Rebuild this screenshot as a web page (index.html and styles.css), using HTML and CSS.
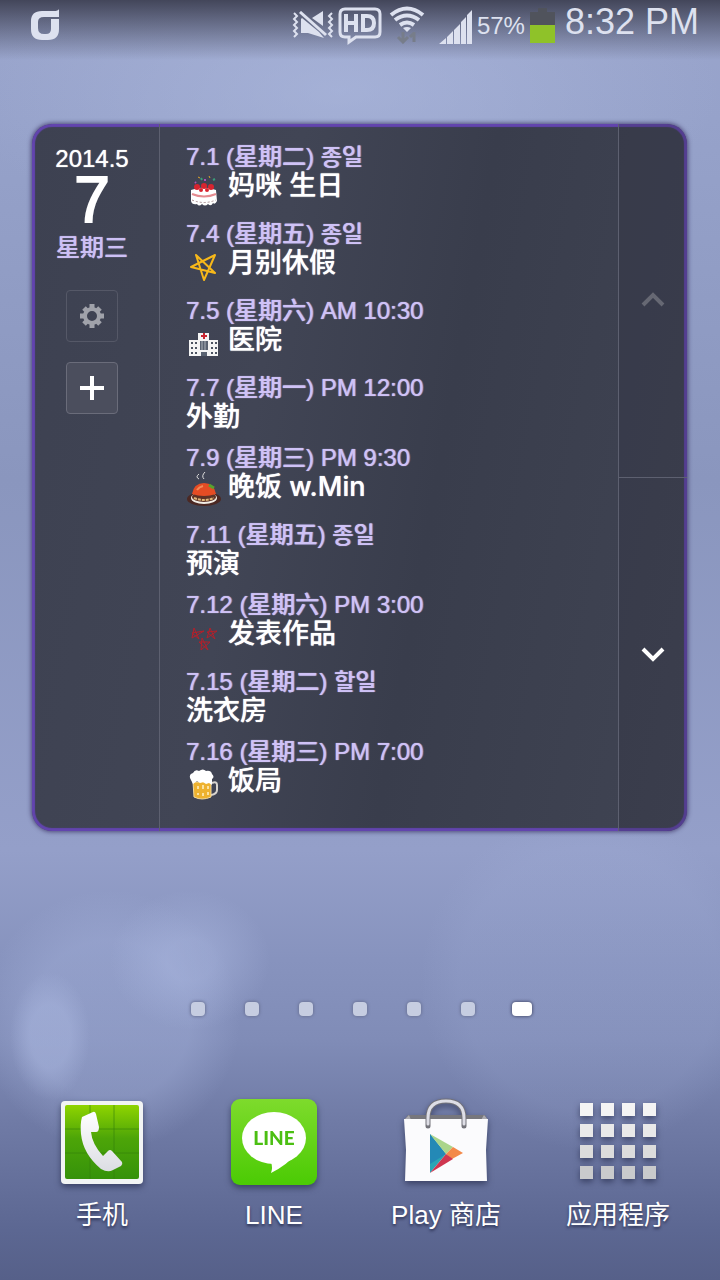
FILE: index.html
```html
<!DOCTYPE html>
<html lang="zh-CN">
<head>
<meta charset="utf-8">
<meta name="viewport" content="width=device-width, initial-scale=1">
<title>Home screen</title>
<link rel="stylesheet" href="styles.css">
</head>
<body>
<header class="status">
  <svg class="carrier" width="30" height="32" viewBox="0 0 30 32" aria-hidden="true"><path fill="currentColor" fill-rule="evenodd" d="M29 0V8H20V10H29V20Q29 31 18 31H12Q1 31 1 20V12Q1 2 12 2H24Q28 2 29 0ZM14 8Q8 8 8 13V19Q8 25 14 25H16Q21 25 21 20V10H20V8Z"/></svg>
  <div class="status-icons">
    <svg width="42" height="30" viewBox="0 0 42 30" aria-hidden="true"><g fill="none" stroke="currentColor" stroke-width="2"><path d="M2 2l3 3-3 3 3 3-3 3 3 3-3 3 3 3-3 3M40 2l-3 3 3 3-3 3 3 3-3 3 3 3-3 3 3 3"/><path stroke-width="3" d="M8 1l26 23"/></g><path fill="currentColor" d="M9 8v14h7l16 5-5-6L10 7zM20 7L31 0v15z"/></svg>
    <svg class="hd" width="44" height="38" viewBox="0 0 44 38" aria-hidden="true"><path fill="none" stroke="currentColor" stroke-width="3" d="M7 2h30q5 0 5 5v18q0 5-5 5H18l-7 5v-5H7q-5 0-5-5V7q0-5 5-5z"/><path fill="none" stroke="currentColor" stroke-width="4" d="M8 7v18M18 7v18M8 16h10M25 9v14h4q7 0 7-7t-7-7z"/></svg>
    <svg class="wifi" width="36" height="38" viewBox="0 0 36 38" aria-hidden="true"><g fill="none" stroke="currentColor" stroke-width="4"><path d="M2 9q16-13 32 0M6 14q12-9 24 0M11 19q7-5 14 0"/></g><path fill="currentColor" d="M14 22q4-2 8 0l-4 4z"/><path fill="none" stroke="#777d8a" stroke-width="3" d="M14 26v10M9 31l5 5 5-5M25 36V26M21 31l4-4"/></svg>
    <svg class="signal" width="34" height="34" viewBox="0 0 34 34" aria-hidden="true"><path fill="currentColor" d="M0 34l7-6v6zM8 27l6-6v13H8zM15 20l6-6v20h-6zM22 12l5-5v27h-5zM28 5l5-5v34h-5z"/></svg>
    <span class="percent">57%</span>
    <svg class="battery" width="26" height="36" viewBox="0 0 26 36" aria-hidden="true"><path fill="#50535c" d="M0 4h8V0h9v4h8v14H0z"/><path fill="#8fc229" d="M0 17h25v18H0z"/></svg>
    <span class="clock">8:32 PM</span>
  </div>
</header>

<main class="home">
  <section class="widget">
    <div class="today">
      <span class="month">2014.5</span>
      <span class="day">7</span>
      <span class="weekday">星期三</span>
      <button class="tool tool-settings" aria-label="设置"><svg width="26" height="26" viewBox="0 0 26 26"><circle cx="13" cy="13" r="7" fill="none" stroke="#a0a2aa" stroke-width="4"/><path stroke="#a0a2aa" stroke-width="5" d="M13 1v4M13 21v4M1 13h4M21 13h4M5 5l3 3M18 18l3 3M21 5l-3 3M8 18l-3 3"/></svg></button>
      <button class="tool tool-add" aria-label="添加"><svg width="24" height="24" viewBox="0 0 24 24"><path stroke="#fff" stroke-width="4" d="M12 0v24M0 12h24"/></svg></button>
    </div>

    <ul class="events">
      <li class="event">
        <p class="when">7.1 (星期二) <span lang="ko">종일</span></p>
        <div class="what"><svg class="mark" viewBox="0 0 34 34" aria-hidden="true"><path fill="#fff" d="M4 17q13-5 25 0l1 11q-2 4-4 2-2 4-5 1-3 3-6 0-3 3-5 0-5 1-6-3z"/><path fill="none" stroke="#e58b90" stroke-width="2" d="M5 21q12 5 24 0"/><path fill="none" stroke="#a88f92" stroke-dasharray="2 2" d="M5 27q12 5 24 0"/><g fill="#d8242f"><circle cx="10" cy="14" r="3"/><circle cx="17" cy="13" r="3"/><circle cx="24" cy="14" r="3"/><circle cx="14" cy="17" r="2"/><circle cx="20" cy="17" r="2"/></g><path stroke="#e0a52a" stroke-width="1" d="M11 4l2 1M22 3l1 2"/><path stroke="#3a9c7a" stroke-width="2" d="M14 5l1 2M26 7l2-1"/><path stroke="#b050b8" stroke-width="2" d="M18 6v2M8 9l1 1"/></svg><h3 class="title">妈咪 生日</h3></div>
      </li>
      <li class="event">
        <p class="when">7.4 (星期五) <span lang="ko">종일</span></p>
        <div class="what"><svg class="mark" viewBox="0 0 34 34" aria-hidden="true"><path fill="none" stroke="#f7b81a" stroke-width="2" stroke-linejoin="round" d="M9 5L28 23 4 17 28 5 17 30z"/></svg><h3 class="title">月别休假</h3></div>
      </li>
      <li class="event">
        <p class="when">7.5 (星期六) AM 10:30</p>
        <div class="what"><svg class="mark" viewBox="0 0 34 34" aria-hidden="true"><path fill="#f4f4f4" d="M2 13h9V6h11v7h9v16H2z"/><path stroke="#c92531" stroke-width="2" d="M17 6v6M14 9h6"/><path fill="#596271" d="M13 14h8v9h-8zM14 25h6v4h-6z"/><path stroke="#aeb4bd" d="M15 14v9M18 14v9"/><path stroke="#4c5361" stroke-width="2" stroke-dasharray="2 2" d="M4 16h6M4 21h6M4 26h6M24 16h6M24 21h6M24 26h6"/></svg><h3 class="title">医院</h3></div>
      </li>
      <li class="event">
        <p class="when">7.7 (星期一) PM 12:00</p>
        <div class="what what-plain"><h3 class="title">外勤</h3></div>
      </li>
      <li class="event">
        <p class="when">7.9 (星期三) PM 9:30</p>
        <div class="what"><svg class="mark" viewBox="0 0 34 34" aria-hidden="true"><ellipse cx="17" cy="25" rx="17" ry="7" fill="#4b2823"/><ellipse cx="17" cy="24" rx="13" ry="6" fill="#f1ede6"/><ellipse cx="17" cy="23" rx="12" ry="5" fill="#5e3226"/><path stroke="#dfb578" stroke-width="2" stroke-dasharray="3 1" d="M7 24q10 4 20 0" fill="none"/><path fill="#e54c24" d="M5 20Q7 9 17 9q10 0 12 11-12 4-24 0z"/><path stroke="#f38b58" fill="none" stroke-width="2" d="M10 16q2-3 6-4"/><path stroke="#59a12e" stroke-width="3" d="M22 11l5 3"/><path fill="none" stroke="#ddd" d="M12 0q-4 3 0 5M18-2q-4 4-1 7"/></svg><h3 class="title">晚饭 w.Min</h3></div>
      </li>
      <li class="event">
        <p class="when">7.11 (星期五) <span lang="ko">종일</span></p>
        <div class="what what-plain"><h3 class="title">预演</h3></div>
      </li>
      <li class="event">
        <p class="when">7.12 (星期六) PM 3:00</p>
        <div class="what"><svg class="mark" viewBox="0 0 34 34" aria-hidden="true"><g fill="none" stroke="#b51f2a" stroke-width="1"><path d="M7 7l5 11-7-6 12-2L5 17zM23 7l5 11-8-7 10-1-10 7zM15 17l6 12-9-8h11l-9 8z"/></g></svg><h3 class="title">发表作品</h3></div>
      </li>
      <li class="event">
        <p class="when">7.15 (星期二) <span lang="ko">할일</span></p>
        <div class="what what-plain"><h3 class="title">洗衣房</h3></div>
      </li>
      <li class="event">
        <p class="when">7.16 (星期三) PM 7:00</p>
        <div class="what"><svg class="mark" viewBox="0 0 34 34" aria-hidden="true"><path fill="none" stroke="#d8d4cf" stroke-width="2" d="M25 15q5-2 5 2v5q0 4-6 5"/><path fill="#eeb22f" stroke="#f3d99c" d="M6 14h18v15q-9 4-17 0z"/><path fill="none" stroke="#fbe2a2" stroke-width="2" d="M11 18v3M16 17v4M21 18v3M11 25v2M16 25v3M21 24v3"/><path fill="#fff" d="M6 16l-3-6q-1-4 3-5 2-4 6-2 4-3 7 0 5-1 6 3 3 3 0 5v6l-3-2-3 1-3-2-3 1-3-2z"/></svg><h3 class="title">饭局</h3></div>
      </li>
    </ul>

    <div class="scroller">
      <button class="scroll scroll-up" aria-label="上一页"><svg width="24" height="18" viewBox="0 0 24 18"><path fill="none" stroke="#666873" stroke-width="4" d="M2 14l10-10 10 10"/></svg></button>
      <button class="scroll" aria-label="下一页"><svg width="24" height="18" viewBox="0 0 24 18"><path fill="none" stroke="#fff" stroke-width="4" d="M2 4l10 10 10-10"/></svg></button>
    </div>
  </section>

  <nav class="pager" aria-label="页面">
    <button class="page" aria-label="1"></button>
    <button class="page" aria-label="2"></button>
    <button class="page" aria-label="3"></button>
    <button class="page" aria-label="4"></button>
    <button class="page" aria-label="5"></button>
    <button class="page" aria-label="6"></button>
    <button class="page page-current" aria-label="7" aria-current="page"></button>
  </nav>
</main>

<footer class="dock">
  <a class="app" href="#phone">
    <svg class="app-icon" viewBox="0 0 90 90" aria-hidden="true"><defs><linearGradient id="leaf" x2="0" y2="1"><stop offset="0" stop-color="#8fd400"/><stop offset=".45" stop-color="#4da508"/><stop offset="1" stop-color="#35920a"/></linearGradient><linearGradient id="handset" x2="0" y2="1"><stop stop-color="#fff"/><stop offset="1" stop-color="#dcdde3"/></linearGradient></defs><rect x="4" y="3" width="82" height="83" rx="4" fill="#f2f4f4"/><rect x="8" y="7" width="74" height="74" rx="2" fill="url(#leaf)"/><path stroke="#34800c" stroke-opacity=".6" d="M33 7v74M57 7v74M8 31h74M8 55h74"/><path fill="url(#handset)" d="M25 19L36 14q2-1 3 2l3 13q0 5-3 5h-5q1 12 12 24l5-5q2-2 4 0l10 11q1 2-1 4l-8 4q-5 3-12-1Q26 56 24 36q-1-10 1-17z"/></svg>
    <span class="app-name">手机</span>
  </a>
  <a class="app" href="#line">
    <svg class="app-icon" viewBox="0 0 90 90" aria-hidden="true"><defs><linearGradient id="lime" x2="0" y2="1"><stop stop-color="#7edb2c"/><stop offset="1" stop-color="#4bcb04"/></linearGradient></defs><rect x="2" y="1" width="86" height="86" rx="9" fill="url(#lime)"/><ellipse cx="45" cy="40" rx="32" ry="26" fill="#fff"/><path fill="#fff" d="M42 64q2 6 0 11 16-8 25-19l-10 3z"/><text class="bubble-text" x="45" y="47" text-anchor="middle">LINE</text></svg>
    <span class="app-name">LINE</span>
  </a>
  <a class="app" href="#store">
    <svg class="app-icon" viewBox="0 0 90 90" aria-hidden="true"><path fill="#77777d" d="M7 17h77l3 5H3z"/><path fill="#aaaab0" d="M8 17l-5 5h7zM83 17l4 5h-7z"/><path fill="#fbfbfd" d="M3 21h84l-2 31 1 31H4l1-31z"/><path fill="#2aa5b5" d="M29 36v39l16-19z"/><path fill="#2489b6" d="M29 36l16 20-16 10z"/><path fill="#abd58b" d="M29 36l23 13-7 7z"/><path fill="#f3894a" d="M52 49l10 6-11 6-6-5z"/><path fill="#cf3650" d="M29 75l16-19 7 5z"/><path fill="none" stroke="#73737a" stroke-width="5" stroke-linecap="round" d="M27 28V20q0-17 18-17t18 17v8"/><path fill="none" stroke="#dedee6" stroke-width="3" stroke-linecap="round" d="M27 26V20q0-17 18-17t18 17v6"/></svg>
    <span class="app-name">Play 商店</span>
  </a>
  <a class="app" href="#apps">
    <svg class="app-icon" viewBox="0 0 90 90" aria-hidden="true"><path fill="#f4f4f4" d="M7 5h13v13H7zM28 5h13v13H28zM49 5h13v13H49zM70 5h13v13H70z"/><path fill="#e9e9e9" d="M7 26h13v13H7zM28 26h13v13H28zM49 26h13v13H49zM70 26h13v13H70z"/><path fill="#dcdcdc" d="M7 47h13v13H7zM28 47h13v13H28zM49 47h13v13H49zM70 47h13v13H70z"/><path fill="#c9cacc" d="M7 68h13v13H7zM28 68h13v13H28zM49 68h13v13H49zM70 68h13v13H70z"/></svg>
    <span class="app-name">应用程序</span>
  </a>
</footer>
</body>
</html>
```

FILE: styles.css
```css
* {
  box-sizing: border-box;
}

body {
  margin: 0;
  min-height: 100vh;
  display: flex;
  flex-direction: column;
  font-family: "Liberation Sans", "Noto Sans CJK SC", sans-serif;
  color: #fff;
  background:
    linear-gradient(#43465a, rgba(67, 70, 90, 0) 60px),
    radial-gradient(ellipse 40px 64px at 50px 1036px, rgba(175, 188, 228, 0.4) 50%, transparent),
    radial-gradient(ellipse 80px 70px at 190px 960px, rgba(175, 188, 228, 0.4) 30%, transparent),
    radial-gradient(circle at 110px 1020px, rgba(168, 181, 222, 0.35) 80px, transparent 130px),
    radial-gradient(circle at 590px 980px, rgba(168, 181, 222, 0.15) 130px, transparent 170px),
    radial-gradient(ellipse 380px 160px at 340px 90px, rgba(178, 190, 226, 0.5), transparent),
    linear-gradient(#9aa5cc 0, #96a2ca 120px, #8a96be 480px, #949fc9 850px, #8793be 960px, #808cb7 1040px, #707ba6 1120px, #5c6792 1230px, #566089 100%);
}

button {
  margin: 0;
  padding: 0;
  border: 0;
  background: none;
  color: inherit;
  font: inherit;
}

svg {
  display: block;
  flex: none;
}

[lang="ko"] {
  font-family: "Noto Sans CJK KR", sans-serif;
  font-size: 23px;
  line-height: 16px;
}

.status {
  display: flex;
  justify-content: space-between;
  align-items: flex-start;
  height: 50px;
  padding: 9px 21px 0 30px;
  color: #dde1ef;
}

.status-icons {
  display: flex;
  align-items: flex-start;
  padding-top: 2px;
}

.hd {
  margin: -4px 7px 0 4px;
}

.wifi {
  margin: -5px 14px 0 0;
}

.signal {
  margin: -1px 4px 0 0;
}

.percent {
  font-size: 24px;
  line-height: 30px;
}

.battery {
  margin: -3px 9px 0 5px;
}

.clock {
  font-size: 36px;
  line-height: 40px;
  margin-top: -9px;
}

.widget {
  display: grid;
  grid-template-columns: 128px 1fr 69px;
  margin: 74px 33px 0 32px;
  border-radius: 20px;
  overflow: hidden;
  background: linear-gradient(100deg, #3d4151, #414555 35%, #393d4c 60%, #404453);
  box-shadow:
    inset 0 0 1px 3px #6244ae,
    0 0 4px 1px rgba(50, 40, 90, 0.7);
}

.today {
  display: flex;
  flex-direction: column;
  align-items: center;
  padding: 21px 7px 0 0;
  border-right: 1px solid #5d6070;
}

.month {
  font-size: 24px;
  line-height: 28px;
  text-shadow: 0 0 1px #fff;
}

.day {
  font-size: 64px;
  line-height: 54px;
  -webkit-text-stroke: 2px #fff;
}

.weekday {
  font-size: 24px;
  line-height: 42px;
  font-weight: 500;
  color: #cdc0f5;
  text-shadow: 0 0 1px #cdc0f5;
}

.tool {
  display: flex;
  align-items: center;
  justify-content: center;
  width: 52px;
  height: 52px;
  margin-top: 20px;
  border: 1px solid #555867;
  border-radius: 4px;
}

.tool-settings {
  margin-top: 21px;
}

.tool-add {
  background: #4b4e5d;
  border-color: #6a6c7a;
}

.events {
  list-style: none;
  margin: 0;
  padding: 19px 0 16px 26px;
}

.event {
  padding-bottom: 12px;
}

.when {
  margin: 0;
  height: 28px;
  font-size: 24px;
  line-height: 28px;
  font-weight: 500;
  color: #cfc2f6;
  text-shadow: 0 0 1px #cfc2f6, 1px 0 0 rgba(207, 194, 246, 0.4);
}

.what {
  display: flex;
  height: 37px;
}

.what-plain {
  height: 30px;
}

.mark {
  width: 34px;
  height: 34px;
  margin: 2px 7px 0 1px;
  overflow: visible;
}

.title {
  margin: 0;
  font-family: Inter, "Noto Sans CJK SC", sans-serif;
  font-size: 27px;
  line-height: 30px;
  font-weight: 500;
  text-shadow: 0 0 1px #fff;
}

.scroller {
  display: grid;
  grid-template-rows: 1fr 1fr;
  border-left: 1px solid #5d6070;
  background: rgba(42, 42, 58, 0.25);
}

.scroll {
  display: flex;
  align-items: center;
  justify-content: center;
}

.scroll-up {
  border-bottom: 1px solid #5d6070;
}

.pager {
  display: flex;
  justify-content: center;
  margin-top: 171px;
}

.page {
  width: 14px;
  height: 14px;
  margin: 0 20px;
  border-radius: 4px;
  background: #c6cde1;
  box-shadow: 0 0 3px 1px #6e779b;
}

.page-current {
  width: 20px;
  margin: 0 17px;
  background: #fff;
  box-shadow: 0 0 3px 1px #535a7c;
}

.dock {
  display: grid;
  grid-template-columns: repeat(4, 1fr);
  margin-top: auto;
  padding: 0 16px 48px;
}

.app {
  display: flex;
  flex-direction: column;
  align-items: center;
  color: #fff;
  text-decoration: none;
}

.app-icon {
  width: 90px;
  height: 90px;
  filter: drop-shadow(0 3px 3px rgba(30, 35, 65, 0.6));
}

.app-name {
  margin-top: 10px;
  font-size: 26px;
  line-height: 34px;
  text-shadow: 0 2px 3px #2b3152;
}

.bubble-text {
  font: 900 19px Lato, sans-serif;
  fill: #4bbf12;
}
```
